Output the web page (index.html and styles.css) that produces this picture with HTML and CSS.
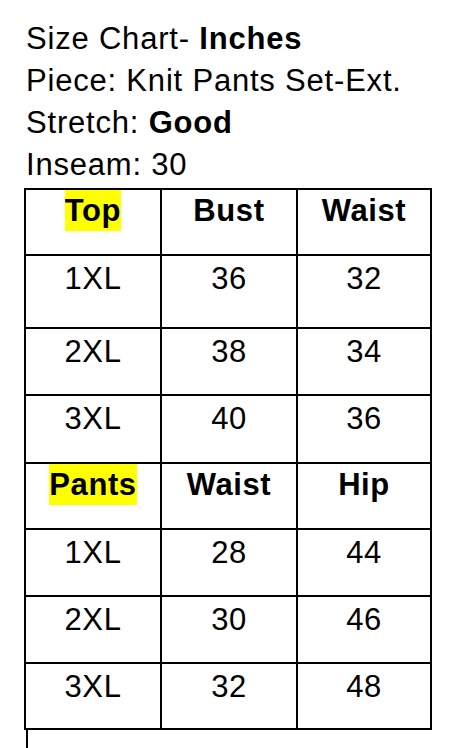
FILE: index.html
```html
<!DOCTYPE html>
<html>
<head>
<meta charset="utf-8">
<link rel="stylesheet" href="styles.css">
</head>
<body>
<div class="page">
  <div class="info">
    <p class="line">Size Chart- <b>Inches</b></p>
    <p class="line">Piece: Knit Pants Set-Ext.</p>
    <p class="line">Stretch: <b>Good</b></p>
    <p class="line">Inseam: 30</p>
  </div>
  <div class="chart">
    <div class="cell head"><span class="hl">Top</span></div>
    <div class="cell head">Bust</div>
    <div class="cell head">Waist</div>

    <div class="cell">1XL</div>
    <div class="cell">36</div>
    <div class="cell">32</div>

    <div class="cell">2XL</div>
    <div class="cell">38</div>
    <div class="cell">34</div>

    <div class="cell">3XL</div>
    <div class="cell">40</div>
    <div class="cell">36</div>

    <div class="cell head"><span class="hl">Pants</span></div>
    <div class="cell head">Waist</div>
    <div class="cell head">Hip</div>

    <div class="cell">1XL</div>
    <div class="cell">28</div>
    <div class="cell">44</div>

    <div class="cell">2XL</div>
    <div class="cell">30</div>
    <div class="cell">46</div>

    <div class="cell">3XL</div>
    <div class="cell">32</div>
    <div class="cell">48</div>
  </div>
  <div class="caret"></div>
</div>
</body>
</html>
```

FILE: styles.css
```css
html, body {
  margin: 0;
  padding: 0;
  background: #ffffff;
}

body {
  font-family: "Liberation Sans", Arial, sans-serif;
  color: #000000;
}

.page {
  width: 472px;
  height: 748px;
  overflow: hidden;
  padding: 18px 0 0 24px;
  box-sizing: border-box;
}

.info {
  padding-left: 2px;
}

.line {
  margin: 0;
  font-size: 31px;
  line-height: 42px;
  letter-spacing: 0.8px;
  white-space: nowrap;
}

.line b {
  font-weight: 700;
}

.chart {
  margin-top: 2px;
  width: 408px;
  box-sizing: border-box;
  display: grid;
  grid-template-columns: 134px 134px 132px;
  grid-template-rows: 64px 71px 65px 66px 64px 65px 65px 64px;
  gap: 2px;
  padding: 2px;
  background: #000000;
}

.cell {
  background: #ffffff;
  text-align: center;
  font-size: 31px;
  line-height: 41px;
  letter-spacing: 0.6px;
  padding-top: 2px;
  box-sizing: border-box;
}

.cell.head {
  font-weight: 700;
  padding-top: 0;
}

.hl {
  display: inline-block;
  background: #ffff00;
  height: 41px;
  line-height: 41px;
  vertical-align: top;
}

.caret {
  width: 2px;
  height: 18px;
  margin-left: 2px;
  background: #000000;
}
```
